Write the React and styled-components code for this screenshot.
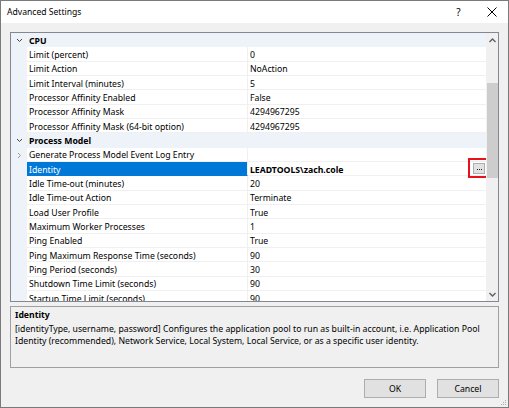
import React from "react";
import styled, { createGlobalStyle } from "styled-components";

const Global = createGlobalStyle`
  html, body { margin: 0; padding: 0; background: #fff; }
  body { width: 509px; height: 408px; overflow: hidden; font-family: "Noto Sans", "Open Sans", sans-serif; }
  * { box-sizing: border-box; }
`;

const Window = styled.div`
  width: 509px;
  height: 408px;
  border: 1px solid #7a7a7a;
  display: flex;
  flex-direction: column;
  background: #f0f0f0;
  font-size: 8.7px;
  color: #000;
`;

const TitleBar = styled.div`
  height: 22px;
  background: #fff;
  display: flex;
  align-items: center;
  padding-left: 6px;
  font-size: 8.6px;
`;

const Title = styled.div`
  flex: 1;
`;

const TitleButton = styled.div`
  width: 33px;
  height: 22px;
  display: flex;
  align-items: center;
  justify-content: center;
  color: #000;
  font-size: 10px;
`;

const Client = styled.div`
  flex: 1;
  display: flex;
  flex-direction: column;
  padding: 9px 9px 0 9px;
  position: relative;
`;

const Grid = styled.div`
  height: 270px;
  border: 1px solid #828790;
  background: #fff;
  display: flex;
  overflow: hidden;
`;

const Rows = styled.div`
  flex: 1;
  display: flex;
  flex-direction: column;
  overflow: hidden;
`;

const Row = styled.div`
  height: 14.33px;
  flex: 0 0 14.33px;
  display: flex;
  align-items: stretch;
  background: ${(p) => (p.$category ? "#eef3f9" : "#fff")};
  line-height: 12px;
`;

const Gutter = styled.div`
  width: 16px;
  flex: 0 0 16px;
  background: #eef3f9;
  display: flex;
  align-items: center;
  justify-content: center;
  padding-top: 1px;
  color: ${(p) => (p.$dim ? "#9a9a9a" : "#444")};
`;

const CategoryLabel = styled.div`
  flex: 1;
  padding: 2px 0 0 2px;
  font-weight: 700;
  display: flex;
  align-items: center;
`;

const NameCell = styled.div`
  width: 221px;
  flex: 0 0 221px;
  padding: 2px 0 0 2px;
  display: flex;
  align-items: center;
  white-space: nowrap;
  overflow: hidden;
  border-bottom: 1px solid ${(p) => (p.$selected ? "#0078d7" : "#f0f0f0")};
  border-right: 1px solid #f0f0f0;
  background: ${(p) => (p.$selected ? "#0078d7" : "#fff")};
  color: ${(p) => (p.$selected ? "#fff" : "#000")};
`;

const ValueCell = styled.div`
  flex: 1;
  padding: 2px 0 0 2px;
  display: flex;
  align-items: center;
  white-space: nowrap;
  border-bottom: 1px solid #f0f0f0;
  font-weight: ${(p) => (p.$bold ? 700 : 400)};
  position: relative;
`;

const EllipsisButton = styled.div`
  position: absolute;
  right: 1px;
  top: 1px;
  width: 12px;
  height: 11px;
  background: #e1e1e1;
  border: 1px solid #adadad;
  display: flex;
  align-items: flex-end;
  justify-content: center;
  gap: 1px;
  padding-bottom: 3px;
`;

const Dot = styled.span`
  width: 1px;
  height: 1px;
  background: #222;
`;

const Highlight = styled.div`
  position: absolute;
  right: -3px;
  top: -4px;
  width: 21px;
  height: 20px;
  border: 2px solid #e8121b;
  z-index: 2;
`;

const ScrollBar = styled.div`
  width: 12px;
  flex: 0 0 12px;
  background: #f0f0f0;
  display: flex;
  flex-direction: column;
`;

const ScrollArrow = styled.div`
  height: 14px;
  display: flex;
  align-items: center;
  justify-content: center;
`;

const ScrollTrack = styled.div`
  flex: 1;
  display: flex;
  flex-direction: column;
`;

const Thumb = styled.div`
  margin-top: 36px;
  height: 95px;
  background: #cdcdcd;
  margin-left: 1px;
`;

const Description = styled.div`
  margin-top: 4px;
  height: 62px;
  border: 1px solid #a0a0a0;
  padding: 2px 4px;
  line-height: 12px;
`;

const DescTitle = styled.div`
  font-weight: 700;
  margin-bottom: 2px;
`;

const DescText = styled.div`
  color: #000;
`;

const Footer = styled.div`
  display: flex;
  justify-content: flex-end;
  gap: 11px;
  margin-top: 11px;
`;

const Button = styled.div`
  width: 62px;
  height: 19px;
  background: #e1e1e1;
  border: 1px solid #adadad;
  display: flex;
  align-items: center;
  justify-content: center;
`;

const Grip = styled.svg`
  position: absolute;
  right: 1px;
  bottom: 1px;
`;

const Chevron = ({ dir }) => (
  <svg width="7" height="7" viewBox="0 0 7 7">
    {dir === "down" ? (
      <path d="M1 2 L3.5 4.5 L6 2" fill="none" stroke="currentColor" strokeWidth="1" />
    ) : (
      <path d="M2 1 L4.5 3.5 L2 6" fill="none" stroke="currentColor" strokeWidth="1" />
    )}
  </svg>
);

const Arrow = ({ up }) => (
  <svg width="7" height="5" viewBox="0 0 7 5">
    <path d={up ? "M0.5 4 L3.5 1 L6.5 4" : "M0.5 1 L3.5 4 L6.5 1"} fill="none" stroke="#606060" strokeWidth="1.4" />
  </svg>
);

const rows = [
  { cat: "CPU" },
  { name: "Limit (percent)", value: "0" },
  { name: "Limit Action", value: "NoAction" },
  { name: "Limit Interval (minutes)", value: "5" },
  { name: "Processor Affinity Enabled", value: "False" },
  { name: "Processor Affinity Mask", value: "4294967295" },
  { name: "Processor Affinity Mask (64-bit option)", value: "4294967295" },
  { cat: "Process Model" },
  { name: "Generate Process Model Event Log Entry", value: "", expand: true },
  { name: "Identity", value: "LEADTOOLS\\zach.cole", selected: true },
  { name: "Idle Time-out (minutes)", value: "20" },
  { name: "Idle Time-out Action", value: "Terminate" },
  { name: "Load User Profile", value: "True" },
  { name: "Maximum Worker Processes", value: "1" },
  { name: "Ping Enabled", value: "True" },
  { name: "Ping Maximum Response Time (seconds)", value: "90" },
  { name: "Ping Period (seconds)", value: "30" },
  { name: "Shutdown Time Limit (seconds)", value: "90" },
  { name: "Startup Time Limit (seconds)", value: "90" },
];

export default function App() {
  return (
    <>
      <Global />
      <Window>
        <TitleBar>
          <Title>Advanced Settings</Title>
          <TitleButton>?</TitleButton>
          <TitleButton>
            <svg width="10" height="10" viewBox="0 0 10 10">
              <path d="M0.5 0.5 L9.5 9.5 M9.5 0.5 L0.5 9.5" stroke="#000" strokeWidth="1" />
            </svg>
          </TitleButton>
        </TitleBar>
        <Client>
          <Grid>
            <Rows>
              {rows.map((r, i) =>
                r.cat ? (
                  <Row key={i} $category>
                    <Gutter>
                      <Chevron dir="down" />
                    </Gutter>
                    <CategoryLabel>{r.cat}</CategoryLabel>
                  </Row>
                ) : (
                  <Row key={i}>
                    <Gutter $dim>{r.expand ? <Chevron dir="right" /> : null}</Gutter>
                    <NameCell $selected={r.selected}>{r.name}</NameCell>
                    <ValueCell $bold={r.selected}>
                      {r.value}
                      {r.selected && (
                        <>
                          <EllipsisButton>
                            <Dot />
                            <Dot />
                            <Dot />
                          </EllipsisButton>
                          <Highlight />
                        </>
                      )}
                    </ValueCell>
                  </Row>
                )
              )}
            </Rows>
            <ScrollBar>
              <ScrollArrow>
                <Arrow up />
              </ScrollArrow>
              <ScrollTrack>
                <Thumb />
              </ScrollTrack>
              <ScrollArrow>
                <Arrow />
              </ScrollArrow>
            </ScrollBar>
          </Grid>
          <Description>
            <DescTitle>Identity</DescTitle>
            <DescText>
              [identityType, username, password] Configures the application pool to run as built-in account, i.e. Application Pool
              Identity (recommended), Network Service, Local System, Local Service, or as a specific user identity.
            </DescText>
          </Description>
          <Footer>
            <Button>OK</Button>
            <Button>Cancel</Button>
          </Footer>
          <Grip width="6" height="6" viewBox="0 0 6 6">
            <rect x="4" y="0" width="1" height="1" fill="#aaa" />
            <rect x="2" y="2" width="1" height="1" fill="#aaa" />
            <rect x="4" y="2" width="1" height="1" fill="#aaa" />
            <rect x="0" y="4" width="1" height="1" fill="#aaa" />
            <rect x="2" y="4" width="1" height="1" fill="#aaa" />
            <rect x="4" y="4" width="1" height="1" fill="#aaa" />
          </Grip>
        </Client>
      </Window>
    </>
  );
}
